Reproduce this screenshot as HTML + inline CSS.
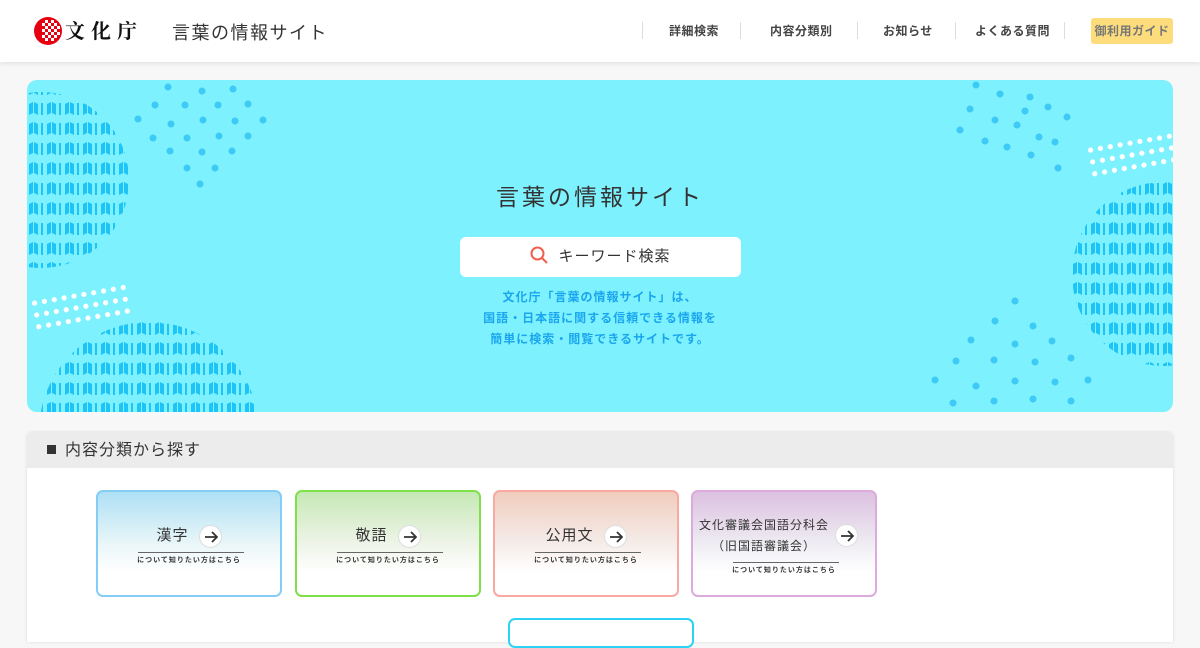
<!DOCTYPE html>
<html><head><meta charset="utf-8"><style>
*{margin:0;padding:0;box-sizing:border-box}
body{width:1200px;height:630px;overflow:hidden;background:#f7f7f7;font-family:"Liberation Sans","Noto Sans CJK JP",sans-serif;color:#333;position:relative}
.hdr{position:absolute;left:0;top:0;width:1200px;height:62px;background:#fff;box-shadow:0 2px 4px rgba(0,0,0,.08)}
.logo{position:absolute;left:33px;top:16px}
.site{position:absolute;left:172px;top:19px;font-size:18px;letter-spacing:1.5px;color:#333}
.nav{position:absolute;top:22px;font-size:12px;font-weight:bold;color:#444;letter-spacing:.5px}
.sep{position:absolute;top:22px;width:1px;height:17px;background:#ddd}
.guide{position:absolute;left:1091px;top:18px;width:82px;height:26px;background:#fddc7c;border-radius:3px;font-size:12px;font-weight:bold;color:#777;text-align:center;line-height:26px;letter-spacing:.5px}
.hero{position:absolute;left:27px;top:80px;width:1146px;height:332px;background:#7ef1fe;border-radius:10px;overflow:hidden}
.title{position:absolute;left:0;width:1146px;top:98px;text-align:center;font-size:23px;letter-spacing:3px;color:#333}
.search{position:absolute;left:433px;top:157px;width:281px;height:40px;background:#fff;border-radius:6px;font-size:15px;line-height:40px;text-align:center;color:#333;letter-spacing:1px}
.desc{position:absolute;left:0;width:1146px;top:207px;text-align:center;font-size:12px;line-height:21px;color:#19a6ee;font-weight:bold;letter-spacing:1px}
.sec{position:absolute;left:27px;top:432px;width:1146px;height:210px;background:#fff;border-radius:6px 6px 0 0;box-shadow:0 0 3px rgba(0,0,0,.12)}
.sech{height:36px;background:#ececec;border-radius:6px 6px 0 0;font-size:16px;line-height:38px;padding-left:20px;letter-spacing:1px;color:#333}
.sech i{display:inline-block;width:9px;height:9px;background:#333;margin-right:9px;vertical-align:1px}
.card{position:absolute;top:490px;width:186px;height:107px;border:2px solid;border-radius:7px;overflow:hidden;background:#fff}
.card .t{position:absolute;left:0;width:100%;text-align:center;font-size:15px;color:#333;letter-spacing:1px}
.ar{display:inline-block;width:23px;height:23px;border-radius:50%;background:#fff;border:1px solid #ddd;margin-left:10px;vertical-align:middle;position:relative}
.ar svg{position:absolute;left:4px;top:4px}
.card .l{position:absolute;left:40px;width:106px;border-top:1px solid #666}
.card .s{position:absolute;left:0;width:100%;text-align:center;font-size:7px;font-weight:bold;color:#333;letter-spacing:1px}
.btn{position:absolute;left:508px;top:618px;width:186px;height:30px;border:2px solid #2dd3f5;border-radius:7px;background:#fff}
</style></head><body>
<div class="hdr">
<svg class="logo" width="120" height="30" viewBox="0 0 120 30">
<circle cx="15" cy="15" r="14" fill="#e60012"/>
<g fill="#fff">
<rect x="12" y="4" width="3" height="3"/><rect x="18" y="4" width="3" height="3"/><rect x="9" y="7" width="3" height="3"/><rect x="15" y="7" width="3" height="3"/><rect x="21" y="7" width="3" height="3"/><rect x="12" y="10" width="3" height="3"/><rect x="18" y="10" width="3" height="3"/><rect x="24" y="10" width="3" height="3"/><rect x="9" y="13" width="3" height="3"/><rect x="15" y="13" width="3" height="3"/><rect x="21" y="13" width="3" height="3"/><rect x="12" y="16" width="3" height="3"/><rect x="18" y="16" width="3" height="3"/><rect x="24" y="16" width="3" height="3"/><rect x="9" y="19" width="3" height="3"/><rect x="15" y="19" width="3" height="3"/><rect x="21" y="19" width="3" height="3"/><rect x="12" y="22" width="3" height="3"/><rect x="18" y="22" width="3" height="3"/></g>
<text x="32" y="22" font-size="20" font-weight="bold" fill="#111" font-family="Noto Serif CJK SC,serif" letter-spacing="6">文化庁</text>
</svg>
<div class="site">言葉の情報サイト</div>
<div class="sep" style="left:642px"></div><div class="nav" style="left:669px">詳細検索</div>
<div class="sep" style="left:740px"></div><div class="nav" style="left:770px">内容分類別</div>
<div class="sep" style="left:857px"></div><div class="nav" style="left:883px">お知らせ</div>
<div class="sep" style="left:955px"></div><div class="nav" style="left:975px">よくある質問</div>
<div class="sep" style="left:1064px"></div>
<div class="guide">御利用ガイド</div>
</div>
<div class="hero">
<svg width="1146" height="332" style="position:absolute;left:0;top:0">
<defs><pattern id="p" width="18" height="20" patternUnits="userSpaceOnUse">
<path d="M2 4 L6 2 L6 13 L2 15Z M7 2 L11 4 L11 15 L7 13Z" fill="#1ec4f5"/><rect x="14" y="3" width="2" height="12" fill="#1ec4f5"/></pattern></defs>
<circle cx="14" cy="100" r="88" fill="url(#p)"/>
<circle cx="122" cy="352" r="110" fill="url(#p)"/>
<circle cx="1137" cy="194" r="92" fill="url(#p)"/>
<g fill="#3dcaf6">
<circle cx="141" cy="7" r="3.5"/><circle cx="175" cy="11" r="3.5"/><circle cx="206" cy="9" r="3.5"/><circle cx="128" cy="25" r="3.5"/><circle cx="158" cy="25" r="3.5"/><circle cx="191" cy="25" r="3.5"/><circle cx="221" cy="24" r="3.5"/><circle cx="111" cy="39" r="3.5"/><circle cx="144" cy="44" r="3.5"/><circle cx="176" cy="40" r="3.5"/><circle cx="208" cy="41" r="3.5"/><circle cx="236" cy="40" r="3.5"/><circle cx="126" cy="58" r="3.5"/><circle cx="160" cy="58" r="3.5"/><circle cx="192" cy="56" r="3.5"/><circle cx="221" cy="56" r="3.5"/><circle cx="143" cy="71" r="3.5"/><circle cx="175" cy="72" r="3.5"/><circle cx="205" cy="71" r="3.5"/><circle cx="160" cy="88" r="3.5"/><circle cx="188" cy="88" r="3.5"/><circle cx="173" cy="104" r="3.5"/>
<circle cx="949" cy="5" r="3.5"/><circle cx="973" cy="14" r="3.5"/><circle cx="1003" cy="17" r="3.5"/><circle cx="943" cy="29" r="3.5"/><circle cx="998" cy="31" r="3.5"/><circle cx="1021" cy="27" r="3.5"/><circle cx="968" cy="40" r="3.5"/><circle cx="990" cy="45" r="3.5"/><circle cx="1040" cy="37" r="3.5"/><circle cx="933" cy="50" r="3.5"/><circle cx="958" cy="61" r="3.5"/><circle cx="980" cy="67" r="3.5"/><circle cx="1012" cy="57" r="3.5"/><circle cx="1004" cy="75" r="3.5"/><circle cx="1028" cy="62" r="3.5"/><circle cx="1031" cy="88" r="3.5"/>
<circle cx="988" cy="221" r="3.5"/><circle cx="968" cy="241" r="3.5"/><circle cx="1006" cy="246" r="3.5"/><circle cx="944" cy="260" r="3.5"/><circle cx="988" cy="264" r="3.5"/><circle cx="1025" cy="261" r="3.5"/><circle cx="929" cy="281" r="3.5"/><circle cx="967" cy="280" r="3.5"/><circle cx="1008" cy="282" r="3.5"/><circle cx="1044" cy="278" r="3.5"/><circle cx="908" cy="300" r="3.5"/><circle cx="949" cy="306" r="3.5"/><circle cx="988" cy="301" r="3.5"/><circle cx="1028" cy="302" r="3.5"/><circle cx="1061" cy="300" r="3.5"/><circle cx="926" cy="323" r="3.5"/><circle cx="967" cy="321" r="3.5"/><circle cx="1006" cy="319" r="3.5"/><circle cx="1044" cy="321" r="3.5"/></g>
<g fill="#fff">
<g transform="translate(-4,215) rotate(-10)"><circle cx="10" cy="10" r="2.6"/><circle cx="20" cy="10" r="2.6"/><circle cx="30" cy="10" r="2.6"/><circle cx="40" cy="10" r="2.6"/><circle cx="50" cy="10" r="2.6"/><circle cx="60" cy="10" r="2.6"/><circle cx="70" cy="10" r="2.6"/><circle cx="80" cy="10" r="2.6"/><circle cx="90" cy="10" r="2.6"/><circle cx="100" cy="10" r="2.6"/>
<circle cx="10" cy="22" r="2.6"/><circle cx="20" cy="22" r="2.6"/><circle cx="30" cy="22" r="2.6"/><circle cx="40" cy="22" r="2.6"/><circle cx="50" cy="22" r="2.6"/><circle cx="60" cy="22" r="2.6"/><circle cx="70" cy="22" r="2.6"/><circle cx="80" cy="22" r="2.6"/><circle cx="90" cy="22" r="2.6"/><circle cx="100" cy="22" r="2.6"/>
<circle cx="10" cy="34" r="2.6"/><circle cx="20" cy="34" r="2.6"/><circle cx="30" cy="34" r="2.6"/><circle cx="40" cy="34" r="2.6"/><circle cx="50" cy="34" r="2.6"/><circle cx="60" cy="34" r="2.6"/><circle cx="70" cy="34" r="2.6"/><circle cx="80" cy="34" r="2.6"/><circle cx="90" cy="34" r="2.6"/><circle cx="100" cy="34" r="2.6"/></g>
<g transform="translate(1052,62) rotate(-10)"><circle cx="10" cy="10" r="2.6"/><circle cx="20" cy="10" r="2.6"/><circle cx="30" cy="10" r="2.6"/><circle cx="40" cy="10" r="2.6"/><circle cx="50" cy="10" r="2.6"/><circle cx="60" cy="10" r="2.6"/><circle cx="70" cy="10" r="2.6"/><circle cx="80" cy="10" r="2.6"/><circle cx="90" cy="10" r="2.6"/>
<circle cx="10" cy="22" r="2.6"/><circle cx="20" cy="22" r="2.6"/><circle cx="30" cy="22" r="2.6"/><circle cx="40" cy="22" r="2.6"/><circle cx="50" cy="22" r="2.6"/><circle cx="60" cy="22" r="2.6"/><circle cx="70" cy="22" r="2.6"/><circle cx="80" cy="22" r="2.6"/><circle cx="90" cy="22" r="2.6"/>
<circle cx="10" cy="34" r="2.6"/><circle cx="20" cy="34" r="2.6"/><circle cx="30" cy="34" r="2.6"/><circle cx="40" cy="34" r="2.6"/><circle cx="50" cy="34" r="2.6"/><circle cx="60" cy="34" r="2.6"/><circle cx="70" cy="34" r="2.6"/><circle cx="80" cy="34" r="2.6"/><circle cx="90" cy="34" r="2.6"/></g></g>
</svg>
<div class="title">言葉の情報サイト</div>
<div class="search"><svg width="18" height="18" viewBox="0 0 18 18" style="vertical-align:-3px;margin-right:10px"><circle cx="7.5" cy="7.5" r="6" fill="none" stroke="#f0604f" stroke-width="2"/><path d="M12 12 L17 17" stroke="#f0604f" stroke-width="2"/></svg>キーワード検索</div>
<div class="desc">文化庁「言葉の情報サイト」は、<br>国語・日本語に関する信頼できる情報を<br>簡単に検索・閲覧できるサイトです。</div>
</div>
<div class="sec"><div class="sech"><i></i>内容分類から探す</div></div>
<div class="card" style="left:96px;border-color:#86cdf6;background:linear-gradient(#aee0f5,#e9f6f8 50%,#fff 78%)"><div class="t" style="top:32px">漢字<span class="ar"><svg width="14" height="14"><path d="M1 7H13M8 2L13 7L8 12" fill="none" stroke="#333" stroke-width="1.8"/></svg></span></div><div class="l" style="top:60px"></div><div class="s" style="top:63px">について知りたい方はこちら</div></div>
<div class="card" style="left:295px;border-color:#7fe04c;background:linear-gradient(#c5e8b4,#eef4e8 50%,#fff 78%)"><div class="t" style="top:32px">敬語<span class="ar"><svg width="14" height="14"><path d="M1 7H13M8 2L13 7L8 12" fill="none" stroke="#333" stroke-width="1.8"/></svg></span></div><div class="l" style="top:60px"></div><div class="s" style="top:63px">について知りたい方はこちら</div></div>
<div class="card" style="left:493px;border-color:#f8a9a2;background:linear-gradient(#f0cdbd,#f5ece9 50%,#fff 78%)"><div class="t" style="top:32px">公用文<span class="ar"><svg width="14" height="14"><path d="M1 7H13M8 2L13 7L8 12" fill="none" stroke="#333" stroke-width="1.8"/></svg></span></div><div class="l" style="top:60px"></div><div class="s" style="top:63px">について知りたい方はこちら</div></div>
<div class="card" style="left:691px;border-color:#dcaade;background:linear-gradient(#dcc0e0,#eeecf2 50%,#fff 78%)"><div class="t" style="top:24px;font-size:12px;left:-20px">文化審議会国語分科会</div><div class="t" style="top:45px;font-size:12px;left:-20px">（旧国語審議会）</div><span class="ar" style="position:absolute;left:142px;top:32px;margin:0"><svg width="14" height="14"><path d="M1 7H13M8 2L13 7L8 12" fill="none" stroke="#333" stroke-width="1.8"/></svg></span><div class="l" style="top:70px"></div><div class="s" style="top:73px">について知りたい方はこちら</div></div>
<div class="btn"></div>
</body></html>
